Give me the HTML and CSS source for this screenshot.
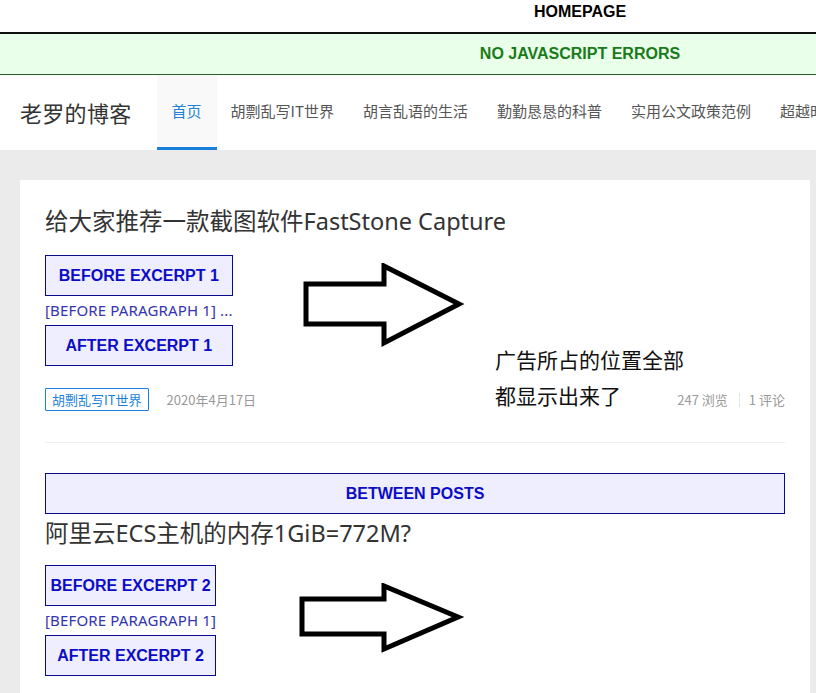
FILE: index.html
```html
<!DOCTYPE html>
<html lang="zh-CN">
<head>
<meta charset="utf-8">
<title>老罗的博客</title>
<link rel="stylesheet" href="styles.css">
</head>
<body>
<div class="topbar">HOMEPAGE</div>
<div class="jsbar">NO JAVASCRIPT ERRORS</div>
<header class="header">
  <div class="logo">老罗的博客</div>
  <nav class="nav">
    <a class="nav-item active">首页</a>
    <a class="nav-item">胡剽乱写IT世界</a>
    <a class="nav-item">胡言乱语的生活</a>
    <a class="nav-item">勤勤恳恳的科普</a>
    <a class="nav-item">实用公文政策范例</a>
    <a class="nav-item">超越时空</a>
  </nav>
</header>
<main class="main">
  <div class="card">
    <article class="post">
      <h2 class="post-title">给大家推荐一款截图软件FastStone Capture</h2>
      <div class="excerpt">
        <div class="ad">BEFORE EXCERPT 1</div>
        <p class="para">[BEFORE PARAGRAPH 1] ...</p>
        <div class="ad">AFTER EXCERPT 1</div>
      </div>
      <div class="meta">
        <div class="meta-left">
          <span class="tag">胡剽乱写IT世界</span>
          <span class="date">2020年4月17日</span>
        </div>
        <div class="meta-right">
          <span>247 浏览</span><span class="sep"></span><span>1 评论</span>
        </div>
      </div>
      <svg class="arrow arrow-1" width="166" height="86" viewBox="0 0 166 86">
        <polygon points="4,21 82,21 82,3 157,41 82,80 82,61 4,61" fill="none" stroke="#000" stroke-width="5" stroke-linejoin="miter"/>
      </svg>
      <div class="note">广告所占的位置全部<br>都显示出来了</div>
    </article>
    <div class="divider"></div>
    <div class="ad ad-wide">BETWEEN POSTS</div>
    <article class="post">
      <h2 class="post-title">阿里云ECS主机的内存1GiB=772M?</h2>
      <div class="excerpt excerpt-2">
        <div class="ad">BEFORE EXCERPT 2</div>
        <p class="para">[BEFORE PARAGRAPH 1]</p>
        <div class="ad">AFTER EXCERPT 2</div>
      </div>
      <svg class="arrow arrow-2" width="168" height="72" viewBox="0 0 168 72">
        <polygon points="4,16 86,16 86,3 160,34 86,66 86,51 4,51" fill="none" stroke="#000" stroke-width="5" stroke-linejoin="miter"/>
      </svg>
    </article>
  </div>
</main>
</body>
</html>
```
FILE: styles.css
```css
html, body {
  margin: 0;
  padding: 0;
}
body {
  width: 816px;
  height: 693px;
  overflow: hidden;
  background: #ebebeb;
  font-family: "Noto Sans", "Noto Sans CJK SC", sans-serif;
}
.topbar {
  background: #fff;
  height: 34px;
  line-height: 23px;
  padding-left: 344px;
  text-align: center;
  font-family: "Liberation Sans", Arial, sans-serif;
  font-weight: bold;
  font-size: 16px;
  color: #000;
  border-bottom: 2px solid #111;
  box-sizing: border-box;
}
.jsbar {
  background: #eaffea;
  height: 41px;
  line-height: 39px;
  padding-left: 344px;
  text-align: center;
  font-family: "Liberation Sans", Arial, sans-serif;
  font-weight: bold;
  font-size: 16px;
  color: #197a19;
  border-bottom: 1px solid #2b5e2b;
  box-sizing: border-box;
}
.header {
  background: #fff;
  height: 75px;
  display: flex;
  align-items: stretch;
  white-space: nowrap;
  overflow: hidden;
}
.logo {
  padding-left: 20px;
  padding-right: 26px;
  font-family: "Noto Sans CJK SC", sans-serif;
  font-size: 22px;
  color: #333;
  line-height: 75px;
  letter-spacing: 0.3px;
}
.nav {
  display: flex;
}
.nav-item {
  display: block;
  padding: 0 15px;
  margin-right: -1px;
  font-family: "Noto Sans CJK SC", sans-serif;
  font-size: 15px;
  color: #555;
  line-height: 72px;
  border-bottom: 3px solid transparent;
}
.nav-item.active {
  color: #2382d8;
  background: #f9f9f9;
  border-bottom-color: #1a7fdc;
  margin-left: -1px;
}
.main {
  padding: 30px 6px 0 20px;
}
.card {
  background: #fff;
  padding: 22px 25px 20px;
  display: flex;
  flex-direction: column;
}
.post {
  position: relative;
  display: flex;
  flex-direction: column;
}
.post-title {
  margin: 0;
  font-family: "Noto Sans", "Noto Sans CJK SC", sans-serif;
  font-weight: normal;
  font-size: 23.5px;
  line-height: 38px;
  color: #333;
}
.excerpt {
  display: flex;
  flex-direction: column;
  align-items: stretch;
  align-self: flex-start;
  margin-top: 15px;
}
.excerpt-2 {
  margin-top: 13px;
}
.ad {
  border: 1px solid #0a0a8c;
  background: #eeeefe;
  color: #0b0bc8;
  font-family: "Liberation Sans", Arial, sans-serif;
  font-weight: bold;
  font-size: 16px;
  line-height: 39px;
  text-align: center;
  white-space: nowrap;
}
.ad-wide {
  margin-top: 30px;
}
.para {
  margin: 0;
  font-family: "Noto Sans", sans-serif;
  font-size: 15px;
  line-height: 29px;
  color: #3434b0;
  letter-spacing: 0.15px;
  white-space: nowrap;
}
.meta {
  display: flex;
  justify-content: space-between;
  align-items: center;
  margin-top: 22px;
  font-family: "Noto Sans CJK SC", sans-serif;
  font-size: 13px;
  color: #999;
}
.meta-left {
  display: flex;
  align-items: center;
  gap: 18px;
}
.tag {
  border: 1px solid #1a7fdc;
  color: #1a7fdc;
  padding: 0 6px;
  line-height: 21px;
  border-radius: 1px;
}
.meta-right {
  display: flex;
  align-items: center;
}
.sep {
  width: 1px;
  height: 14px;
  background: #e4e4e4;
  margin: 0 9px 0 11px;
}
.divider {
  height: 1px;
  background: #eee;
  margin-top: 31px;
}
.arrow {
  position: absolute;
}
.arrow-1 {
  left: 257px;
  top: 61px;
}
.arrow-2 {
  left: 253px;
  top: 69px;
}
.note {
  position: absolute;
  left: 450px;
  top: 139px;
  font-family: "Noto Sans CJK SC", sans-serif;
  font-size: 21px;
  line-height: 36px;
  color: #111;
  white-space: nowrap;
}
```
